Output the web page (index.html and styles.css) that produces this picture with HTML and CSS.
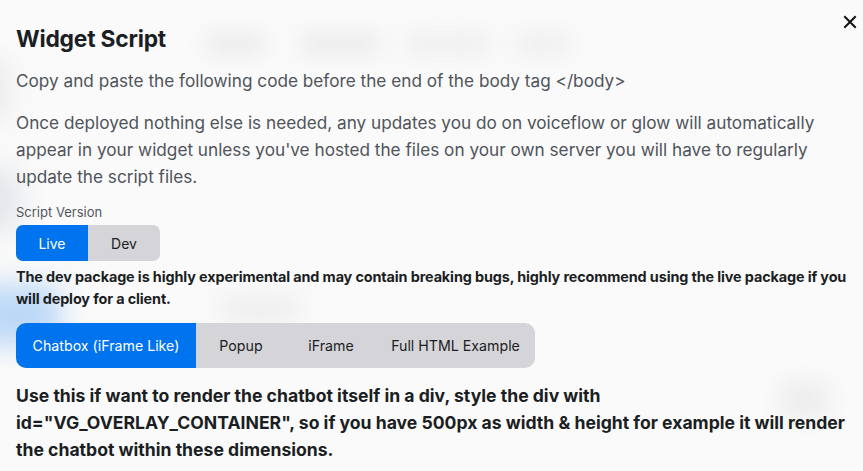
FILE: index.html
```html
<!DOCTYPE html>
<html>
<head>
<meta charset="utf-8">
<link rel="stylesheet" href="styles.css">
</head>
<body>
<div class="backdrop">
  <div class="ghost g1"></div>
  <div class="ghost g2"></div>
  <div class="ghost g3"></div>
  <div class="ghost g4"></div>
  <div class="ghost g5"></div>
  <div class="ghost g6"></div>
  <div class="ghost g7"></div>
  <div class="ghost g8"></div>
  <div class="ghost g9"></div>
</div>
<div class="modal">
  <button class="close" aria-label="Close">
    <svg width="14" height="14" viewBox="0 0 14 14"><path d="M2 2 L12 12 M12 2 L2 12" stroke="#111" stroke-width="2" stroke-linecap="square"/></svg>
  </button>
  <h1 class="title">Widget Script</h1>
  <p class="lead">Copy and paste the following code before the end of the body tag &lt;/body&gt;</p>
  <p class="desc">Once deployed nothing else is needed, any updates you do on voiceflow or glow will automatically appear in your widget unless you've hosted the files on your own server you will have to regularly update the script files.</p>
  <div class="label">Script Version</div>
  <div class="seg small">
    <span class="opt active">Live</span>
    <span class="opt">Dev</span>
  </div>
  <p class="warn">The dev package is highly experimental and may contain breaking bugs, highly recommend using the live package if you will deploy for a client.</p>
  <div class="seg tabs">
    <span class="tab t1 active">Chatbox (iFrame Like)</span>
    <span class="tab t2">Popup</span>
    <span class="tab t3">iFrame</span>
    <span class="tab t4">Full HTML Example</span>
  </div>
  <p class="info">Use this if want to render the chatbot itself in a div, style the div with id="VG_OVERLAY_CONTAINER", so if you have 500px as width &amp; height for example it will render the chatbot within these dimensions.</p>
</div>
</body>
</html>
```
FILE: styles.css
```css
html, body {
  margin: 0;
  padding: 0;
  width: 863px;
  height: 471px;
  overflow: hidden;
  background: #fafafa;
  font-family: "Inter", "Noto Sans", sans-serif;
  color: #1b1e22;
}
.backdrop {
  position: absolute;
  inset: 0;
  overflow: hidden;
  pointer-events: none;
}
.ghost {
  position: absolute;
  border-radius: 8px;
  filter: blur(10px);
}
.g1 { left: 205px; top: 32px; width: 60px; height: 24px; background: #ececec; }
.g2 { left: 300px; top: 32px; width: 80px; height: 24px; background: #ececec; }
.g3 { left: 405px; top: 32px; width: 85px; height: 24px; background: #efefef; }
.g4 { left: 515px; top: 32px; width: 55px; height: 24px; background: #efefef; }
.g5 { left: -30px; top: 285px; width: 90px; height: 60px; background: #bcd8f7; filter: blur(14px); }
.g6 { left: -40px; top: 170px; width: 60px; height: 60px; background: #e2e6ea; filter: blur(14px); }
.g7 { left: 220px; top: 298px; width: 80px; height: 24px; background: #ececec; filter: blur(12px); }
.g8 { left: 780px; top: 380px; width: 50px; height: 40px; background: #eeeeee; filter: blur(10px); }
.g9 { left: -30px; top: 60px; width: 40px; height: 60px; background: #ececec; filter: blur(12px); }
.modal {
  position: relative;
  padding: 0 8px 0 16px;
}
.close {
  position: absolute;
  right: 6px;
  top: 15px;
  width: 14px;
  height: 14px;
  padding: 0;
  border: 0;
  background: transparent;
  display: flex;
}
.title {
  margin: 0;
  padding-top: 24px;
  font-size: 22.8px;
  line-height: 30px;
  font-weight: 700;
  letter-spacing: -0.2px;
}
.lead {
  margin: 13px 0 0;
  font-size: 17.2px;
  line-height: 27px;
  color: #50545a;
}
.desc {
  margin: 15px 0 0;
  font-size: 17.2px;
  line-height: 27px;
  color: #50545a;
}
.label {
  margin-top: 13px;
  font-size: 13px;
  line-height: 18px;
  color: #53575c;
}
.seg {
  display: inline-flex;
  overflow: hidden;
  background: #d5d4d9;
}
.small {
  margin-top: 4px;
  border-radius: 7px;
  height: 36px;
}
.opt {
  width: 72px;
  display: flex;
  align-items: center;
  justify-content: center;
  font-size: 14px;
  color: #1b1e22;
}
.active {
  background: #0073ee;
}
.opt.active { color: #fff; }
.warn {
  margin: 5px 0 0;
  font-size: 14.4px;
  line-height: 22px;
  font-weight: 700;
  letter-spacing: -0.12px;
}
.tabs {
  margin-top: 13px;
  border-radius: 10px;
  height: 45px;
}
.tab {
  display: flex;
  align-items: center;
  justify-content: center;
  font-size: 14.2px;
  color: #1b1e22;
}
.t1 { width: 180px; }
.t2 { width: 90px; }
.t3 { width: 90px; }
.t4 { width: 159px; }
.tab.active { color: #fff; }
.info {
  margin: 14px 0 0;
  font-size: 17.6px;
  line-height: 27px;
  font-weight: 700;
}
```
